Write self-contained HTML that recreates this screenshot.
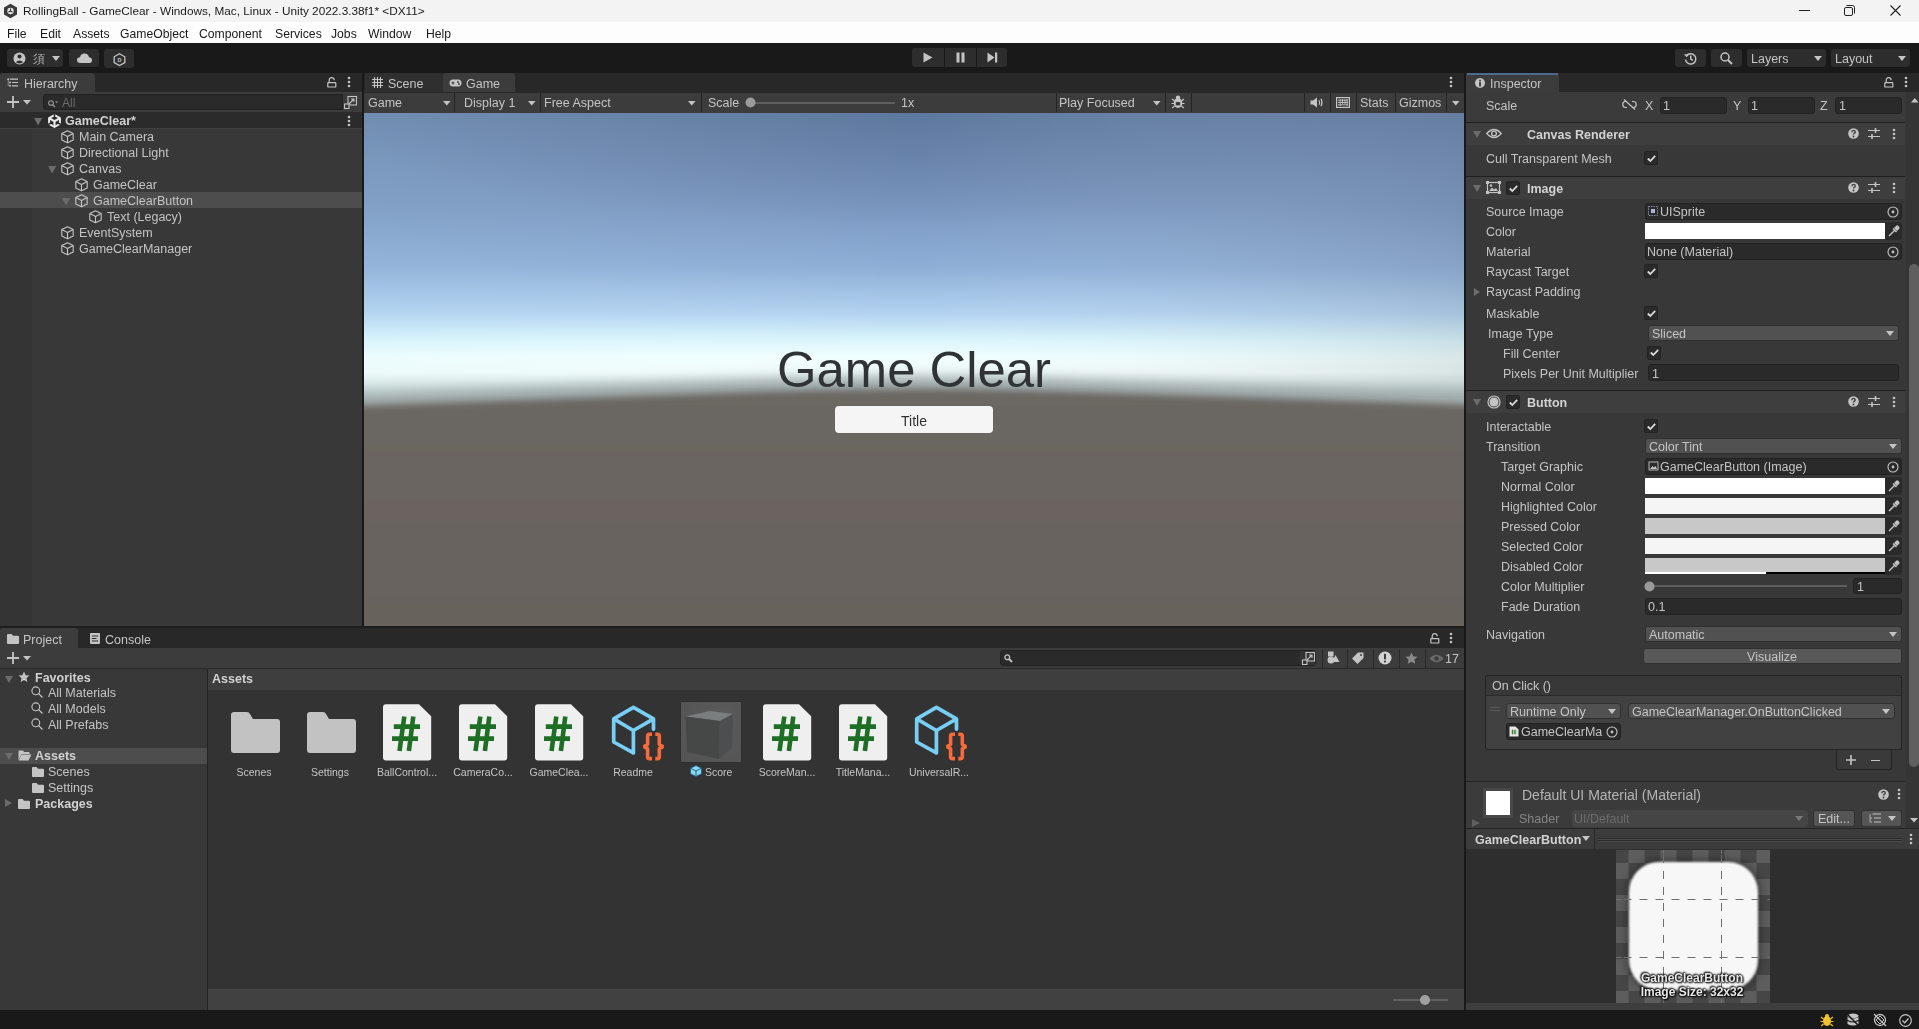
<!DOCTYPE html>
<html><head><meta charset="utf-8">
<style>
*{box-sizing:border-box;margin:0;padding:0}
html,body{width:1919px;height:1029px;overflow:hidden;background:#191919;font-family:"Liberation Sans",sans-serif;font-size:12.5px;color:#c4c4c4;position:relative;-webkit-font-smoothing:antialiased}
.a{position:absolute}
.t{position:absolute;white-space:nowrap;will-change:transform}
svg.a{overflow:visible}
</style></head><body>
<div class="a" style="left:0px;top:0px;width:1919px;height:22px;background:#f3f3f3;"></div>
<svg class="a" style="left:3px;top:3px;" width="15" height="16" viewBox="0 0 15 16"><path d="M7.5 0.8L14 4.4V11.6L7.5 15.2L1 11.6V4.4Z" fill="#3a3a3a"/><circle cx="7.5" cy="8" r="3.2" fill="#e8e8e8"/><path d="M7.5 5.5V8L5.4 9.3M7.5 8L9.6 9.3" stroke="#3a3a3a" stroke-width="1.1" fill="none"/></svg>
<div class="t" style="left:23px;top:6.00px;font-size:11.8px;line-height:11.8px;color:#1a1a1a;">RollingBall - GameClear - Windows, Mac, Linux - Unity 2022.3.38f1* &lt;DX11&gt;</div>
<svg class="a" style="left:1799px;top:10px;" width="11" height="2" viewBox="0 0 11 2"><rect x="0" y="0" width="11" height="1" fill="#222"/></svg>
<svg class="a" style="left:1844px;top:5px;" width="11" height="11" viewBox="0 0 11 11"><path d="M2.5 0.5H8.5Q10.5 0.5 10.5 2.5V8.5" stroke="#222" fill="none" stroke-width="1"/><rect x="0.5" y="2.5" width="8" height="8" rx="1.5" stroke="#222" fill="none" stroke-width="1"/></svg>
<svg class="a" style="left:1890px;top:5px;" width="11" height="11" viewBox="0 0 11 11"><path d="M0.5 0.5L10.5 10.5M10.5 0.5L0.5 10.5" stroke="#222" stroke-width="1.1"/></svg>
<div class="a" style="left:0px;top:22px;width:1919px;height:21px;background:#fdfdfd;"></div>
<div class="t" style="left:7px;top:28.00px;font-size:12.2px;line-height:12.2px;color:#1a1a1a;">File</div>
<div class="t" style="left:39.6px;top:28.00px;font-size:12.2px;line-height:12.2px;color:#1a1a1a;">Edit</div>
<div class="t" style="left:73px;top:28.00px;font-size:12.2px;line-height:12.2px;color:#1a1a1a;">Assets</div>
<div class="t" style="left:120px;top:28.00px;font-size:12.2px;line-height:12.2px;color:#1a1a1a;">GameObject</div>
<div class="t" style="left:199px;top:28.00px;font-size:12.2px;line-height:12.2px;color:#1a1a1a;">Component</div>
<div class="t" style="left:275px;top:28.00px;font-size:12.2px;line-height:12.2px;color:#1a1a1a;">Services</div>
<div class="t" style="left:331px;top:28.00px;font-size:12.2px;line-height:12.2px;color:#1a1a1a;">Jobs</div>
<div class="t" style="left:368px;top:28.00px;font-size:12.2px;line-height:12.2px;color:#1a1a1a;">Window</div>
<div class="t" style="left:426.4px;top:28.00px;font-size:12.2px;line-height:12.2px;color:#1a1a1a;">Help</div>
<div class="a" style="left:0px;top:43px;width:1919px;height:30px;background:#191919;"></div>
<div class="a" style="left:7px;top:49px;width:56px;height:18px;background:#2d2d2d;border-radius:3px"></div>
<svg class="a" style="left:13px;top:52px;" width="13" height="13" viewBox="0 0 13 13"><circle cx="6.5" cy="6.5" r="6" fill="#c4c4c4"/><circle cx="6.5" cy="4.6" r="2" fill="#2d2d2d"/><path d="M2.8 10.3Q6.5 6.8 10.2 10.3Q6.5 12.6 2.8 10.3Z" fill="#2d2d2d"/></svg>
<div class="t" style="left:33px;top:54.00px;font-size:11.5px;line-height:11.5px;color:#b0b0b0;">須</div>
<svg class="a" style="left:52px;top:56px;" width="8" height="5" viewBox="0 0 8 5"><path d="M0 0H8L4.0 5Z" fill="#c4c4c4"/></svg>
<div class="a" style="left:69px;top:49px;width:30px;height:18px;background:#2d2d2d;border-radius:3px"></div>
<svg class="a" style="left:77px;top:53px;" width="15" height="10" viewBox="0 0 15 10"><path d="M3.5 10Q0 10 0 7Q0 4.3 3 4.2Q3.8 0.5 7.5 0.5Q11.3 0.5 12 4.3Q15 4.6 15 7.2Q15 10 12 10Z" fill="#c4c4c4"/></svg>
<div class="a" style="left:104px;top:49px;width:30px;height:19px;background:#2d2d2d;border-radius:3px"></div>
<svg class="a" style="left:113px;top:53px;" width="13" height="13" viewBox="0 0 13 13"><path d="M6.5 0.8L11.8 3.8V9.6L6.5 12.6L1.2 9.6V3.8Z" stroke="#c4c4c4" stroke-width="1.3" fill="none"/><text x="6.5" y="9.2" font-size="5.5" font-family="Liberation Sans" font-weight="bold" fill="#c4c4c4" text-anchor="middle">D</text></svg>
<div class="a" style="left:912px;top:48px;width:32px;height:19px;background:#2d2d2d;border-radius:3px 0 0 3px"></div>
<div class="a" style="left:945px;top:48px;width:31px;height:19px;background:#2d2d2d;"></div>
<div class="a" style="left:977px;top:48px;width:30px;height:19px;background:#2d2d2d;border-radius:0 3px 3px 0"></div>
<svg class="a" style="left:923px;top:52px;" width="10" height="11" viewBox="0 0 10 11"><path d="M0.5 0.5L9.5 5.5L0.5 10.5Z" fill="#c4c4c4"/></svg>
<svg class="a" style="left:956px;top:52px;" width="9" height="11" viewBox="0 0 9 11"><rect x="0.5" y="0.5" width="3" height="10" fill="#c4c4c4"/><rect x="5.5" y="0.5" width="3" height="10" fill="#c4c4c4"/></svg>
<svg class="a" style="left:987px;top:52px;" width="11" height="11" viewBox="0 0 11 11"><path d="M0.5 0.5L7.5 5.5L0.5 10.5Z" fill="#c4c4c4"/><rect x="8" y="0.5" width="2.2" height="10" fill="#c4c4c4"/></svg>
<div class="a" style="left:1675px;top:49px;width:31px;height:18px;background:#2d2d2d;border-radius:3px"></div>
<svg class="a" style="left:1684px;top:52px;" width="13" height="13" viewBox="0 0 13 13"><path d="M2.2 4.2A5.2 5.2 0 1 1 1.5 7.5" stroke="#c4c4c4" stroke-width="1.5" fill="none"/><path d="M0 2.2L2.6 5.2L5 2.6Z" fill="#c4c4c4"/><path d="M6.8 3.5V7L9 8.5" stroke="#c4c4c4" stroke-width="1.5" fill="none"/></svg>
<div class="a" style="left:1711px;top:49px;width:31px;height:18px;background:#2d2d2d;border-radius:3px"></div>
<svg class="a" style="left:1720px;top:52px;" width="13" height="13" viewBox="0 0 13 13"><circle cx="5" cy="5" r="4" stroke="#c4c4c4" stroke-width="1.5" fill="none"/><path d="M8 8L12 12" stroke="#c4c4c4" stroke-width="2"/></svg>
<div class="a" style="left:1747px;top:49px;width:79px;height:18px;background:#2d2d2d;border-radius:3px"></div>
<div class="t" style="left:1751px;top:53.00px;font-size:12.5px;line-height:12.5px;color:#c4c4c4;">Layers</div>
<svg class="a" style="left:1814px;top:56px;" width="8" height="5" viewBox="0 0 8 5"><path d="M0 0H8L4.0 5Z" fill="#c4c4c4"/></svg>
<div class="a" style="left:1831px;top:49px;width:79px;height:18px;background:#2d2d2d;border-radius:3px"></div>
<div class="t" style="left:1835px;top:53.00px;font-size:12.5px;line-height:12.5px;color:#c4c4c4;">Layout</div>
<svg class="a" style="left:1898px;top:56px;" width="8" height="5" viewBox="0 0 8 5"><path d="M0 0H8L4.0 5Z" fill="#c4c4c4"/></svg>
<div class="a" style="left:0px;top:73px;width:362px;height:19px;background:#282828;"></div>
<div class="a" style="left:0px;top:73px;width:95px;height:19px;background:#3c3c3c;border-radius:3px 3px 0 0"></div>
<svg class="a" style="left:7px;top:78px;" width="12" height="9" viewBox="0 0 12 9"><circle cx="1.2" cy="1.2" r="1" fill="#c4c4c4"/><circle cx="3" cy="4.5" r="1" fill="#c4c4c4"/><circle cx="3" cy="7.8" r="1" fill="#c4c4c4"/><path d="M3 1.2H11M5 4.5H11M5 7.8H11" stroke="#c4c4c4" stroke-width="1.2"/><path d="M1.2 1.2V7.8" stroke="#c4c4c4" stroke-width="0.6"/></svg>
<div class="t" style="left:23.7px;top:78.00px;font-size:12.5px;line-height:12.5px;color:#c4c4c4;">Hierarchy</div>
<svg class="a" style="left:327px;top:77px;" width="10" height="11" viewBox="0 0 10 11"><path d="M2.2 5.4V3.2Q2.2 0.7 4.6 0.7Q7 0.7 7.2 3.2" stroke="#c4c4c4" stroke-width="1.2" fill="none"/><rect x="0.8" y="5.6" width="8" height="4.4" rx="0.6" stroke="#c4c4c4" stroke-width="1.2" fill="none"/></svg>
<svg class="a" style="left:347px;top:76px;" width="4" height="12" viewBox="0 0 4 12"><circle cx="2" cy="2" r="1.3" fill="#c4c4c4"/><circle cx="2" cy="6" r="1.3" fill="#c4c4c4"/><circle cx="2" cy="10" r="1.3" fill="#c4c4c4"/></svg>
<div class="a" style="left:0px;top:92px;width:362px;height:20px;background:#3c3c3c;"></div>
<svg class="a" style="left:7px;top:96px;" width="12" height="12" viewBox="0 0 12 12"><path d="M6 0V12M0 6H12" stroke="#c4c4c4" stroke-width="1.8"/></svg>
<svg class="a" style="left:23px;top:100px;" width="8" height="4.5" viewBox="0 0 8 4.5"><path d="M0 0H8L4.0 4.5Z" fill="#c4c4c4"/></svg>
<div class="a" style="left:43px;top:94px;width:300px;height:16px;background:#2a2a2a;border:1px solid #212121;border-radius:3px 0 0 3px"></div>
<svg class="a" style="left:48px;top:100px;" width="10" height="8" viewBox="0 0 10 8"><circle cx="3" cy="3" r="2.3" stroke="#9a9a9a" stroke-width="1.1" fill="none"/><path d="M4.6 4.6L7 7" stroke="#9a9a9a" stroke-width="1.2"/><path d="M7 1.5H10L8.5 3.2Z" fill="#9a9a9a"/></svg>
<div class="t" style="left:62px;top:97.00px;font-size:12px;line-height:12px;color:#6a6a6a;">All</div>
<div class="a" style="left:343px;top:94px;width:15px;height:16px;background:#3a3a3a;border-radius:0 3px 3px 0"></div>
<svg class="a" style="left:344px;top:96px;" width="13" height="13" viewBox="0 0 13 13"><rect x="4" y="0.5" width="8.5" height="8.5" stroke="#c4c4c4" fill="none" stroke-width="1.1"/><rect x="0.5" y="8" width="4.5" height="4.5" stroke="#c4c4c4" fill="#3a3a3a" stroke-width="1.1"/><path d="M5 8L10 3M7 3H10V6" stroke="#c4c4c4" stroke-width="1.1" fill="none"/></svg>
<div class="a" style="left:0px;top:112px;width:362px;height:514px;background:#383838;"></div>
<div class="a" style="left:0px;top:112px;width:32px;height:514px;background:#343434;"></div>
<div class="a" style="left:0px;top:112px;width:362px;height:16px;background:#2b2b2b;"></div>
<div class="a" style="left:0px;top:128px;width:362px;height:1px;background:#404040;"></div>
<svg class="a" style="left:34.4px;top:118px;" width="8.2" height="7.5" viewBox="0 0 8.2 7.5"><path d="M0 0H8.2L4.1 7.5Z" fill="#6c6c6c"/></svg>
<svg class="a" style="left:47.5px;top:113.5px;" width="13" height="14" viewBox="0 0 13 14"><path d="M6.5 1L11.9 4.1V9.9L6.5 13L1.1 9.9V4.1Z" stroke="#ececec" stroke-width="2" fill="none" stroke-linejoin="round"/><path d="M1.5 4.3L6.5 7.2L11.5 4.3M6.5 7.2V12.8" stroke="#ececec" stroke-width="2.1" fill="none"/><path d="M6.5 0V5.2M0 10.6L2.8 9M13 10.6L10.2 9" stroke="#2b2b2b" stroke-width="1.5"/></svg>
<div class="t" style="left:65px;top:115.00px;font-size:12.5px;line-height:12.5px;color:#d2d2d2;font-weight:bold;">GameClear*</div>
<svg class="a" style="left:347px;top:115px;" width="4" height="12" viewBox="0 0 4 12"><circle cx="2" cy="2" r="1.3" fill="#c4c4c4"/><circle cx="2" cy="6" r="1.3" fill="#c4c4c4"/><circle cx="2" cy="10" r="1.3" fill="#c4c4c4"/></svg>
<svg class="a" style="left:61px;top:129.5px;" width="13" height="14" viewBox="0 0 13 14"><path d="M6.5 0.8L12.2 3.6V9.9L6.5 12.7L0.8 9.9V3.6Z M0.8 3.6L6.5 6.4L12.2 3.6 M6.5 6.4V12.7" stroke="#c4c4c4" stroke-width="1.1" fill="none" stroke-linejoin="round"/></svg>
<div class="t" style="left:78.5px;top:131.00px;font-size:12.5px;line-height:12.5px;color:#c4c4c4;">Main Camera</div>
<svg class="a" style="left:61px;top:145.5px;" width="13" height="14" viewBox="0 0 13 14"><path d="M6.5 0.8L12.2 3.6V9.9L6.5 12.7L0.8 9.9V3.6Z M0.8 3.6L6.5 6.4L12.2 3.6 M6.5 6.4V12.7" stroke="#c4c4c4" stroke-width="1.1" fill="none" stroke-linejoin="round"/></svg>
<div class="t" style="left:78.5px;top:147.00px;font-size:12.5px;line-height:12.5px;color:#c4c4c4;">Directional Light</div>
<svg class="a" style="left:48px;top:166px;" width="8.2" height="7.5" viewBox="0 0 8.2 7.5"><path d="M0 0H8.2L4.1 7.5Z" fill="#6c6c6c"/></svg>
<svg class="a" style="left:61px;top:161.5px;" width="13" height="14" viewBox="0 0 13 14"><path d="M6.5 0.8L12.2 3.6V9.9L6.5 12.7L0.8 9.9V3.6Z M0.8 3.6L6.5 6.4L12.2 3.6 M6.5 6.4V12.7" stroke="#c4c4c4" stroke-width="1.1" fill="none" stroke-linejoin="round"/></svg>
<div class="t" style="left:78.5px;top:163.00px;font-size:12.5px;line-height:12.5px;color:#c4c4c4;">Canvas</div>
<svg class="a" style="left:75px;top:177.5px;" width="13" height="14" viewBox="0 0 13 14"><path d="M6.5 0.8L12.2 3.6V9.9L6.5 12.7L0.8 9.9V3.6Z M0.8 3.6L6.5 6.4L12.2 3.6 M6.5 6.4V12.7" stroke="#c4c4c4" stroke-width="1.1" fill="none" stroke-linejoin="round"/></svg>
<div class="t" style="left:92.5px;top:179.00px;font-size:12.5px;line-height:12.5px;color:#c4c4c4;">GameClear</div>
<div class="a" style="left:0px;top:192px;width:362px;height:16px;background:#4d4d4d;"></div>
<svg class="a" style="left:62px;top:198px;" width="8.2" height="7.5" viewBox="0 0 8.2 7.5"><path d="M0 0H8.2L4.1 7.5Z" fill="#6c6c6c"/></svg>
<svg class="a" style="left:75px;top:193.5px;" width="13" height="14" viewBox="0 0 13 14"><path d="M6.5 0.8L12.2 3.6V9.9L6.5 12.7L0.8 9.9V3.6Z M0.8 3.6L6.5 6.4L12.2 3.6 M6.5 6.4V12.7" stroke="#c4c4c4" stroke-width="1.1" fill="none" stroke-linejoin="round"/></svg>
<div class="t" style="left:92.5px;top:195.00px;font-size:12.5px;line-height:12.5px;color:#c4c4c4;">GameClearButton</div>
<svg class="a" style="left:89px;top:209.5px;" width="13" height="14" viewBox="0 0 13 14"><path d="M6.5 0.8L12.2 3.6V9.9L6.5 12.7L0.8 9.9V3.6Z M0.8 3.6L6.5 6.4L12.2 3.6 M6.5 6.4V12.7" stroke="#c4c4c4" stroke-width="1.1" fill="none" stroke-linejoin="round"/></svg>
<div class="t" style="left:106.5px;top:211.00px;font-size:12.5px;line-height:12.5px;color:#c4c4c4;">Text (Legacy)</div>
<svg class="a" style="left:61px;top:225.5px;" width="13" height="14" viewBox="0 0 13 14"><path d="M6.5 0.8L12.2 3.6V9.9L6.5 12.7L0.8 9.9V3.6Z M0.8 3.6L6.5 6.4L12.2 3.6 M6.5 6.4V12.7" stroke="#c4c4c4" stroke-width="1.1" fill="none" stroke-linejoin="round"/></svg>
<div class="t" style="left:78.5px;top:227.00px;font-size:12.5px;line-height:12.5px;color:#c4c4c4;">EventSystem</div>
<svg class="a" style="left:61px;top:241.5px;" width="13" height="14" viewBox="0 0 13 14"><path d="M6.5 0.8L12.2 3.6V9.9L6.5 12.7L0.8 9.9V3.6Z M0.8 3.6L6.5 6.4L12.2 3.6 M6.5 6.4V12.7" stroke="#c4c4c4" stroke-width="1.1" fill="none" stroke-linejoin="round"/></svg>
<div class="t" style="left:78.5px;top:243.00px;font-size:12.5px;line-height:12.5px;color:#c4c4c4;">GameClearManager</div>
<div class="a" style="left:364px;top:73px;width:1100px;height:19px;background:#282828;"></div>
<div class="a" style="left:365px;top:73px;width:78px;height:19px;background:#2f2f2f;border-radius:3px 3px 0 0"></div>
<svg class="a" style="left:372px;top:77px;" width="11" height="11" viewBox="0 0 11 11"><path d="M2.5 0V11M5.5 0V11M8.5 0V11M0 2.5H11M0 5.5H11M0 8.5H11" stroke="#c4c4c4" stroke-width="1.1"/></svg>
<div class="t" style="left:388px;top:78.00px;font-size:12.5px;line-height:12.5px;color:#c4c4c4;">Scene</div>
<div class="a" style="left:443px;top:73px;width:72px;height:19px;background:#3c3c3c;border-radius:3px 3px 0 0"></div>
<svg class="a" style="left:449px;top:79px;" width="13" height="8" viewBox="0 0 13 8"><rect x="0.5" y="0.5" width="12" height="7" rx="3.5" fill="#c4c4c4"/><path d="M2.5 4H5.5M4 2.5V5.5" stroke="#3c3c3c" stroke-width="1"/><circle cx="9" cy="3" r="0.9" fill="#3c3c3c"/><circle cx="10" cy="5" r="0.9" fill="#3c3c3c"/></svg>
<div class="t" style="left:466px;top:78.00px;font-size:12.5px;line-height:12.5px;color:#c4c4c4;">Game</div>
<svg class="a" style="left:1449px;top:76px;" width="4" height="12" viewBox="0 0 4 12"><circle cx="2" cy="2" r="1.3" fill="#c4c4c4"/><circle cx="2" cy="6" r="1.3" fill="#c4c4c4"/><circle cx="2" cy="10" r="1.3" fill="#c4c4c4"/></svg>
<div class="a" style="left:364px;top:92px;width:1100px;height:21px;background:#3c3c3c;"></div>
<div class="a" style="left:364px;top:92px;width:1100px;height:1px;background:#2a2a2a;"></div>
<div class="t" style="left:368.4px;top:97.00px;font-size:12.5px;line-height:12.5px;color:#c4c4c4;">Game</div>
<svg class="a" style="left:442.5px;top:100.5px;" width="7.5" height="4.5" viewBox="0 0 7.5 4.5"><path d="M0 0H7.5L3.75 4.5Z" fill="#c4c4c4"/></svg>
<div class="a" style="left:454.4px;top:93px;width:1px;height:19px;background:#242424;"></div>
<div class="t" style="left:464px;top:97.00px;font-size:12.5px;line-height:12.5px;color:#c4c4c4;">Display 1</div>
<svg class="a" style="left:528px;top:100.5px;" width="7.5" height="4.5" viewBox="0 0 7.5 4.5"><path d="M0 0H7.5L3.75 4.5Z" fill="#c4c4c4"/></svg>
<div class="a" style="left:540px;top:93px;width:1px;height:19px;background:#242424;"></div>
<div class="t" style="left:544.4px;top:97.00px;font-size:12.5px;line-height:12.5px;color:#c4c4c4;">Free Aspect</div>
<svg class="a" style="left:688px;top:100.5px;" width="7.5" height="4.5" viewBox="0 0 7.5 4.5"><path d="M0 0H7.5L3.75 4.5Z" fill="#c4c4c4"/></svg>
<div class="a" style="left:700.5px;top:93px;width:1px;height:19px;background:#242424;"></div>
<div class="t" style="left:707.5px;top:97.00px;font-size:12.5px;line-height:12.5px;color:#c4c4c4;">Scale</div>
<div class="a" style="left:750px;top:102px;width:145px;height:2px;background:#5e5e5e;"></div>
<svg class="a" style="left:744.5px;top:97px;" width="11" height="11" viewBox="0 0 11 11"><circle cx="5.5" cy="5.5" r="5" fill="#9a9a9a"/></svg>
<div class="t" style="left:901px;top:97.00px;font-size:12.5px;line-height:12.5px;color:#c4c4c4;">1x</div>
<div class="a" style="left:1055.5px;top:93px;width:1px;height:19px;background:#242424;"></div>
<div class="t" style="left:1059px;top:97.00px;font-size:12.5px;line-height:12.5px;color:#c4c4c4;">Play Focused</div>
<svg class="a" style="left:1153px;top:100.5px;" width="7.5" height="4.5" viewBox="0 0 7.5 4.5"><path d="M0 0H7.5L3.75 4.5Z" fill="#c4c4c4"/></svg>
<div class="a" style="left:1165px;top:93px;width:1px;height:19px;background:#242424;"></div>
<svg class="a" style="left:1171px;top:95px;" width="14" height="14" viewBox="0 0 14 14"><ellipse cx="7" cy="8" rx="4.3" ry="5" fill="#c4c4c4"/><circle cx="7" cy="2.8" r="2.2" fill="#c4c4c4"/><path d="M1 4L3.5 6M13 4L10.5 6M0.5 8.5H3M13.5 8.5H11M1.2 13L3.5 11M12.8 13L10.5 11" stroke="#c4c4c4" stroke-width="1.1"/><rect x="4.8" y="7" width="4.4" height="3.4" fill="#3c3c3c"/></svg>
<div class="a" style="left:1191px;top:93px;width:1px;height:19px;background:#242424;"></div>
<div class="a" style="left:1304px;top:93px;width:1px;height:19px;background:#242424;"></div>
<svg class="a" style="left:1310px;top:97px;" width="14" height="11" viewBox="0 0 14 11"><path d="M0.5 3.5H3L7 0.5V10.5L3 7.5H0.5Z" fill="#c4c4c4"/><path d="M9 3.2Q10.2 5.5 9 7.8M11 1.8Q13 5.5 11 9.2" stroke="#c4c4c4" stroke-width="1.1" fill="none"/></svg>
<div class="a" style="left:1330px;top:93px;width:1px;height:19px;background:#242424;"></div>
<svg class="a" style="left:1336px;top:97px;" width="14" height="11" viewBox="0 0 14 11"><rect x="0.6" y="0.6" width="12.8" height="9.8" stroke="#c4c4c4" stroke-width="1.2" fill="none"/><path d="M2 3.2H12M2 5.5H12M2 7.8H12M4.2 2V9M6.6 2V7M9 2V7M11.2 2V9" stroke="#c4c4c4" stroke-width="0.9"/></svg>
<div class="a" style="left:1356px;top:93px;width:1px;height:19px;background:#242424;"></div>
<div class="t" style="left:1360px;top:97.00px;font-size:12.5px;line-height:12.5px;color:#c4c4c4;">Stats</div>
<div class="a" style="left:1395px;top:93px;width:1px;height:19px;background:#242424;"></div>
<div class="t" style="left:1399px;top:97.00px;font-size:12.5px;line-height:12.5px;color:#c4c4c4;">Gizmos</div>
<div class="a" style="left:1446px;top:93px;width:1px;height:19px;background:#242424;"></div>
<svg class="a" style="left:1451.5px;top:100.5px;" width="7.5" height="4.5" viewBox="0 0 7.5 4.5"><path d="M0 0H7.5L3.75 4.5Z" fill="#c4c4c4"/></svg>
<svg class="a" style="left:364px;top:113px;overflow:hidden" width="1100" height="513" viewBox="0 0 1100 513">
<defs>
<linearGradient id="sky" x1="0" y1="0" x2="0" y2="1">
<stop offset="0" stop-color="#6883ab"/>
<stop offset="0.18" stop-color="#7a97c0"/>
<stop offset="0.30" stop-color="#8eaed6"/>
<stop offset="0.39" stop-color="#b2d2f0"/>
<stop offset="0.44" stop-color="#d8f4fb"/>
<stop offset="0.475" stop-color="#f0fefe"/>
<stop offset="0.505" stop-color="#f0fcfa"/>
<stop offset="0.54" stop-color="#d0e0de"/>
<stop offset="1" stop-color="#c8d4d4"/>
</linearGradient>
<radialGradient id="dome" cx="0.5" cy="0" r="0.5" gradientTransform="translate(0.5 0) scale(1.1 0.75) translate(-0.5 0)">
<stop offset="0" stop-color="#3a4e70" stop-opacity="0.22"/>
<stop offset="0.6" stop-color="#3a4e70" stop-opacity="0.10"/>
<stop offset="1" stop-color="#3a4e70" stop-opacity="0"/>
</radialGradient>
<linearGradient id="side" x1="0" y1="0" x2="1" y2="0">
<stop offset="0" stop-color="#c8f0ff" stop-opacity="0.10"/>
<stop offset="0.5" stop-color="#ffffff" stop-opacity="0"/>
<stop offset="1" stop-color="#606870" stop-opacity="0.16"/>
</linearGradient>
<linearGradient id="ground" x1="0" y1="0" x2="0" y2="1">
<stop offset="0" stop-color="#6c6763"/>
<stop offset="1" stop-color="#67615c"/>
</linearGradient>
<filter id="bl1" x="-10%" y="-50%" width="120%" height="200%"><feGaussianBlur stdDeviation="7"/></filter>
<filter id="bl2" x="-10%" y="-50%" width="120%" height="200%"><feGaussianBlur stdDeviation="3"/></filter>
</defs>
<rect x="0" y="0" width="1100" height="513" fill="url(#sky)"/>
<rect x="0" y="0" width="1100" height="300" fill="url(#dome)"/>
<rect x="0" y="0" width="1100" height="285" fill="url(#side)"/>
<path d="M-30 290 L0 293 L400 279 Q550 274 700 279 L1100 292 L1130 295 V560 H-30Z" fill="#98a2a2" filter="url(#bl1)" transform="translate(0 -12)"/>
<path d="M-30 290 L0 293 L400 279 Q550 274 700 279 L1100 292 L1130 295 V560 H-30Z" fill="url(#ground)" filter="url(#bl2)"/>
</svg>
<div class="t" style="left:614px;width:600px;text-align:center;top:345.00px;font-size:50.8px;line-height:50.8px;color:#2f3336;">Game Clear</div>
<div class="a" style="left:835px;top:406px;width:158px;height:27px;background:#f5f5f5;border-radius:4px"></div>
<div class="t" style="left:614px;width:600px;text-align:center;top:414.00px;font-size:14px;line-height:14px;color:#323232;">Title</div>
<div class="a" style="left:1466px;top:73px;width:453px;height:19px;background:#282828;"></div>
<div class="a" style="left:1466px;top:73px;width:93px;height:19px;background:#3c3c3c;border-radius:3px 3px 0 0"></div>
<div class="a" style="left:1467px;top:73px;width:91px;height:2px;background:#4a6b8c;"></div>
<svg class="a" style="left:1475px;top:78px;" width="10" height="10" viewBox="0 0 10 10"><circle cx="5" cy="5" r="5" fill="#c4c4c4"/><rect x="4.1" y="4" width="1.8" height="4.5" fill="#3c3c3c"/><circle cx="5" cy="2.4" r="1" fill="#3c3c3c"/></svg>
<div class="t" style="left:1490.3px;top:78.00px;font-size:12.5px;line-height:12.5px;color:#c4c4c4;">Inspector</div>
<svg class="a" style="left:1884px;top:77px;" width="10" height="11" viewBox="0 0 10 11"><path d="M2.2 5.4V3.2Q2.2 0.7 4.6 0.7Q7 0.7 7.2 3.2" stroke="#c4c4c4" stroke-width="1.2" fill="none"/><rect x="0.8" y="5.6" width="8" height="4.4" rx="0.6" stroke="#c4c4c4" stroke-width="1.2" fill="none"/></svg>
<svg class="a" style="left:1904px;top:76px;" width="4" height="12" viewBox="0 0 4 12"><circle cx="2" cy="2" r="1.3" fill="#c4c4c4"/><circle cx="2" cy="6" r="1.3" fill="#c4c4c4"/><circle cx="2" cy="10" r="1.3" fill="#c4c4c4"/></svg>
<div class="a" style="left:1466px;top:92px;width:453px;height:736px;background:#383838;"></div>
<div class="a" style="left:1906px;top:92px;width:13px;height:736px;background:#353535;"></div>
<svg class="a" style="left:1910.5px;top:97.5px;" width="7.5" height="4.5" viewBox="0 0 7.5 4.5"><path d="M0 4.5H7.5L3.75 0Z" fill="#c4c4c4"/></svg>
<div class="a" style="left:1909px;top:264px;width:10px;height:503px;background:#5f5f5f;border-radius:5px"></div>
<svg class="a" style="left:1910.2px;top:818px;" width="8" height="4.5" viewBox="0 0 8 4.5"><path d="M0 0H8L4 4.5Z" fill="#c4c4c4"/></svg>
<div class="a" style="left:1466px;top:92px;width:439px;height:31px;background:#3b3b3b;"></div>
<div class="t" style="left:1485.5px;top:100.00px;font-size:12.5px;line-height:12.5px;color:#c4c4c4;">Scale</div>
<svg class="a" style="left:1622px;top:99px;" width="15" height="11" viewBox="0 0 15 11"><path d="M5 2.5H3.5Q0.8 2.5 0.8 5.5Q0.8 8.5 3.5 8.5H5M10 2.5H11.5Q14.2 2.5 14.2 5.5Q14.2 8.5 11.5 8.5H10" stroke="#c4c4c4" stroke-width="1.2" fill="none"/><path d="M2 0.5L13 10.5" stroke="#c4c4c4" stroke-width="1.2"/></svg>
<div class="t" style="left:1645px;top:100.00px;font-size:12.5px;line-height:12.5px;color:#c4c4c4;">X</div>
<div class="a" style="left:1659.5px;top:96.5px;width:67px;height:17px;background:#2a2a2a;border:1px solid #222;border-radius:3px"></div>
<div class="t" style="left:1663.0px;top:100.00px;font-size:12.5px;line-height:12.5px;color:#c4c4c4;">1</div>
<div class="t" style="left:1733px;top:100.00px;font-size:12.5px;line-height:12.5px;color:#c4c4c4;">Y</div>
<div class="a" style="left:1747.5px;top:96.5px;width:67px;height:17px;background:#2a2a2a;border:1px solid #222;border-radius:3px"></div>
<div class="t" style="left:1751.0px;top:100.00px;font-size:12.5px;line-height:12.5px;color:#c4c4c4;">1</div>
<div class="t" style="left:1820px;top:100.00px;font-size:12.5px;line-height:12.5px;color:#c4c4c4;">Z</div>
<div class="a" style="left:1835px;top:96.5px;width:67px;height:17px;background:#2a2a2a;border:1px solid #222;border-radius:3px"></div>
<div class="t" style="left:1838.5px;top:100.00px;font-size:12.5px;line-height:12.5px;color:#c4c4c4;">1</div>
<div class="a" style="left:1466px;top:122px;width:439px;height:1px;background:#1f1f1f;"></div>
<div class="a" style="left:1466px;top:123px;width:439px;height:22px;background:#3e3e3e;"></div>
<svg class="a" style="left:1473px;top:131px;" width="8" height="7" viewBox="0 0 8 7"><path d="M0 0H8L4.0 7Z" fill="#6c6c6c"/></svg>
<svg class="a" style="left:1486px;top:128px;" width="16" height="11" viewBox="0 0 16 11"><path d="M0.8 5.5Q8 -2.5 15.2 5.5Q8 13.5 0.8 5.5Z" stroke="#c4c4c4" stroke-width="1.3" fill="none"/><circle cx="8" cy="5.5" r="2.4" stroke="#c4c4c4" stroke-width="1.3" fill="none"/></svg>
<div class="t" style="left:1526.6px;top:129.00px;font-size:12.5px;line-height:12.5px;color:#d2d2d2;font-weight:bold;">Canvas Renderer</div>
<svg class="a" style="left:1848px;top:128px;" width="11" height="11" viewBox="0 0 11 11"><circle cx="5.5" cy="5.5" r="5.3" fill="#c4c4c4"/><path d="M3.8 4.2Q3.8 2.4 5.5 2.4Q7.2 2.4 7.2 3.9Q7.2 4.9 6 5.5Q5.5 5.8 5.5 6.6" stroke="#3e3e3e" stroke-width="1.4" fill="none"/><circle cx="5.5" cy="8.5" r="0.9" fill="#3e3e3e"/></svg>
<svg class="a" style="left:1868px;top:128px;" width="12" height="11" viewBox="0 0 12 11"><path d="M0 2.5H12M0 8.5H12" stroke="#c4c4c4" stroke-width="1.2"/><path d="M7.5 0V5M4 6V11" stroke="#c4c4c4" stroke-width="1.6"/></svg>
<svg class="a" style="left:1892px;top:127.5px;" width="4" height="12" viewBox="0 0 4 12"><circle cx="2" cy="2" r="1.3" fill="#c4c4c4"/><circle cx="2" cy="6" r="1.3" fill="#c4c4c4"/><circle cx="2" cy="10" r="1.3" fill="#c4c4c4"/></svg>
<div class="t" style="left:1485.5px;top:153.00px;font-size:12.5px;line-height:12.5px;color:#c4c4c4;">Cull Transparent Mesh</div>
<div class="a" style="left:1644px;top:151px;width:14px;height:14px;background:#2a2a2a;border:1px solid #232323;border-radius:2px"></div>
<svg class="a" style="left:1646.5px;top:154.5px;" width="9" height="7" viewBox="0 0 9 7"><path d="M0.8 3.5L3.3 6L8.2 0.8" stroke="#dadada" stroke-width="1.8" fill="none"/></svg>
<div class="a" style="left:1466px;top:176px;width:439px;height:1px;background:#1f1f1f;"></div>
<div class="a" style="left:1466px;top:177px;width:439px;height:22px;background:#3e3e3e;"></div>
<svg class="a" style="left:1473px;top:185px;" width="8" height="7" viewBox="0 0 8 7"><path d="M0 0H8L4.0 7Z" fill="#6c6c6c"/></svg>
<svg class="a" style="left:1486px;top:181px;" width="15" height="13" viewBox="0 0 15 13"><rect x="1.5" y="1.5" width="12" height="10" stroke="#c4c4c4" stroke-width="1.2" fill="none"/><rect x="0" y="0" width="3" height="3" fill="#c4c4c4"/><rect x="12" y="0" width="3" height="3" fill="#c4c4c4"/><rect x="0" y="10" width="3" height="3" fill="#c4c4c4"/><rect x="12" y="10" width="3" height="3" fill="#c4c4c4"/><path d="M3 10L6 6.5L8 8.5L10 7L12 10Z" fill="#c4c4c4"/><circle cx="5" cy="4.5" r="1.2" fill="#c4c4c4"/></svg>
<div class="a" style="left:1506px;top:181px;width:14px;height:14px;background:#2a2a2a;border:1px solid #232323;border-radius:2px"></div>
<svg class="a" style="left:1508.5px;top:184.5px;" width="9" height="7" viewBox="0 0 9 7"><path d="M0.8 3.5L3.3 6L8.2 0.8" stroke="#dadada" stroke-width="1.8" fill="none"/></svg>
<div class="t" style="left:1526.6px;top:183.00px;font-size:12.5px;line-height:12.5px;color:#d2d2d2;font-weight:bold;">Image</div>
<svg class="a" style="left:1848px;top:182px;" width="11" height="11" viewBox="0 0 11 11"><circle cx="5.5" cy="5.5" r="5.3" fill="#c4c4c4"/><path d="M3.8 4.2Q3.8 2.4 5.5 2.4Q7.2 2.4 7.2 3.9Q7.2 4.9 6 5.5Q5.5 5.8 5.5 6.6" stroke="#3e3e3e" stroke-width="1.4" fill="none"/><circle cx="5.5" cy="8.5" r="0.9" fill="#3e3e3e"/></svg>
<svg class="a" style="left:1868px;top:182px;" width="12" height="11" viewBox="0 0 12 11"><path d="M0 2.5H12M0 8.5H12" stroke="#c4c4c4" stroke-width="1.2"/><path d="M7.5 0V5M4 6V11" stroke="#c4c4c4" stroke-width="1.6"/></svg>
<svg class="a" style="left:1892px;top:181.5px;" width="4" height="12" viewBox="0 0 4 12"><circle cx="2" cy="2" r="1.3" fill="#c4c4c4"/><circle cx="2" cy="6" r="1.3" fill="#c4c4c4"/><circle cx="2" cy="10" r="1.3" fill="#c4c4c4"/></svg>
<div class="t" style="left:1485.5px;top:206.00px;font-size:12.5px;line-height:12.5px;color:#c4c4c4;">Source Image</div>
<div class="a" style="left:1644.5px;top:203px;width:257px;height:17px;background:#2a2a2a;border:1px solid #222;border-radius:3px"></div>
<svg class="a" style="left:1648px;top:206px;" width="10" height="10" viewBox="0 0 10 10"><rect x="0.5" y="0.5" width="9" height="9" stroke="#8a8aa0" fill="none" stroke-width="1" stroke-dasharray="1.5 1"/><rect x="3" y="3" width="4" height="4" fill="#b0b0d0"/></svg>
<div class="t" style="left:1660px;top:206.00px;font-size:12.5px;line-height:12.5px;color:#c4c4c4;">UISprite</div>
<svg class="a" style="left:1887px;top:205.5px;" width="12" height="12" viewBox="0 0 12 12"><circle cx="6" cy="6" r="5" stroke="#c4c4c4" stroke-width="1.1" fill="none"/><circle cx="6" cy="6" r="1.4" fill="#c4c4c4"/></svg>
<div class="t" style="left:1485.5px;top:226.00px;font-size:12.5px;line-height:12.5px;color:#c4c4c4;">Color</div>
<div class="a" style="left:1644.5px;top:223px;width:240px;height:16px;background:#ffffff;"></div>
<div class="a" style="left:1884.5px;top:222px;width:17px;height:18px;background:#2a2a2a;border-radius:0 3px 3px 0"></div>
<svg class="a" style="left:1888px;top:225px;" width="12" height="12" viewBox="0 0 12 12"><path d="M1 11L7 5" stroke="#c4c4c4" stroke-width="1.5"/><path d="M6 3L9 6L11.5 3.5Q12 2 10.5 1Q9.5 0 8.5 0.5Z" fill="#c4c4c4"/><path d="M5 3.5L8.5 7" stroke="#c4c4c4" stroke-width="1.4"/></svg>
<div class="t" style="left:1485.5px;top:246.00px;font-size:12.5px;line-height:12.5px;color:#c4c4c4;">Material</div>
<div class="a" style="left:1644.5px;top:243px;width:257px;height:17px;background:#2a2a2a;border:1px solid #222;border-radius:3px"></div>
<div class="t" style="left:1647px;top:246.00px;font-size:12.5px;line-height:12.5px;color:#c4c4c4;">None (Material)</div>
<svg class="a" style="left:1887px;top:245.5px;" width="12" height="12" viewBox="0 0 12 12"><circle cx="6" cy="6" r="5" stroke="#c4c4c4" stroke-width="1.1" fill="none"/><circle cx="6" cy="6" r="1.4" fill="#c4c4c4"/></svg>
<div class="t" style="left:1485.5px;top:266.00px;font-size:12.5px;line-height:12.5px;color:#c4c4c4;">Raycast Target</div>
<div class="a" style="left:1644px;top:264px;width:14px;height:14px;background:#2a2a2a;border:1px solid #232323;border-radius:2px"></div>
<svg class="a" style="left:1646.5px;top:267.5px;" width="9" height="7" viewBox="0 0 9 7"><path d="M0.8 3.5L3.3 6L8.2 0.8" stroke="#dadada" stroke-width="1.8" fill="none"/></svg>
<svg class="a" style="left:1474px;top:288px;" width="6" height="8" viewBox="0 0 6 8"><path d="M0 0L6 4.0L0 8Z" fill="#6c6c6c"/></svg>
<div class="t" style="left:1485.5px;top:286.00px;font-size:12.5px;line-height:12.5px;color:#c4c4c4;">Raycast Padding</div>
<div class="t" style="left:1485.5px;top:308.00px;font-size:12.5px;line-height:12.5px;color:#c4c4c4;">Maskable</div>
<div class="a" style="left:1644px;top:306px;width:14px;height:14px;background:#2a2a2a;border:1px solid #232323;border-radius:2px"></div>
<svg class="a" style="left:1646.5px;top:309.5px;" width="9" height="7" viewBox="0 0 9 7"><path d="M0.8 3.5L3.3 6L8.2 0.8" stroke="#dadada" stroke-width="1.8" fill="none"/></svg>
<div class="t" style="left:1488px;top:328.00px;font-size:12.5px;line-height:12.5px;color:#c4c4c4;">Image Type</div>
<div class="a" style="left:1648px;top:325px;width:251px;height:16px;background:#515151;border:1px solid #303030;border-radius:3px"></div>
<div class="t" style="left:1652px;top:328.00px;font-size:12.5px;line-height:12.5px;color:#c4c4c4;">Sliced</div>
<svg class="a" style="left:1886px;top:331px;" width="8" height="5" viewBox="0 0 8 5"><path d="M0 0H8L4.0 5Z" fill="#c4c4c4"/></svg>
<div class="t" style="left:1503px;top:348.00px;font-size:12.5px;line-height:12.5px;color:#c4c4c4;">Fill Center</div>
<div class="a" style="left:1647px;top:345.5px;width:14px;height:14px;background:#2a2a2a;border:1px solid #232323;border-radius:2px"></div>
<svg class="a" style="left:1649.5px;top:349.0px;" width="9" height="7" viewBox="0 0 9 7"><path d="M0.8 3.5L3.3 6L8.2 0.8" stroke="#dadada" stroke-width="1.8" fill="none"/></svg>
<div class="t" style="left:1503px;top:368.00px;font-size:12.5px;line-height:12.5px;color:#c4c4c4;">Pixels Per Unit Multiplier</div>
<div class="a" style="left:1648px;top:364px;width:251px;height:17px;background:#2a2a2a;border:1px solid #222;border-radius:3px"></div>
<div class="t" style="left:1651.5px;top:368.00px;font-size:12.5px;line-height:12.5px;color:#c4c4c4;">1</div>
<div class="a" style="left:1466px;top:390px;width:439px;height:1px;background:#1f1f1f;"></div>
<div class="a" style="left:1466px;top:391px;width:439px;height:22px;background:#3e3e3e;"></div>
<svg class="a" style="left:1473px;top:399px;" width="8" height="7" viewBox="0 0 8 7"><path d="M0 0H8L4.0 7Z" fill="#6c6c6c"/></svg>
<svg class="a" style="left:1487px;top:395px;" width="14" height="14" viewBox="0 0 14 14"><circle cx="7" cy="7" r="6" stroke="#c4c4c4" stroke-width="1.2" fill="none"/><circle cx="7" cy="7" r="4.5" fill="#c4c4c4"/></svg>
<div class="a" style="left:1506px;top:395px;width:14px;height:14px;background:#2a2a2a;border:1px solid #232323;border-radius:2px"></div>
<svg class="a" style="left:1508.5px;top:398.5px;" width="9" height="7" viewBox="0 0 9 7"><path d="M0.8 3.5L3.3 6L8.2 0.8" stroke="#dadada" stroke-width="1.8" fill="none"/></svg>
<div class="t" style="left:1526.6px;top:397.00px;font-size:12.5px;line-height:12.5px;color:#d2d2d2;font-weight:bold;">Button</div>
<svg class="a" style="left:1848px;top:396px;" width="11" height="11" viewBox="0 0 11 11"><circle cx="5.5" cy="5.5" r="5.3" fill="#c4c4c4"/><path d="M3.8 4.2Q3.8 2.4 5.5 2.4Q7.2 2.4 7.2 3.9Q7.2 4.9 6 5.5Q5.5 5.8 5.5 6.6" stroke="#3e3e3e" stroke-width="1.4" fill="none"/><circle cx="5.5" cy="8.5" r="0.9" fill="#3e3e3e"/></svg>
<svg class="a" style="left:1868px;top:396px;" width="12" height="11" viewBox="0 0 12 11"><path d="M0 2.5H12M0 8.5H12" stroke="#c4c4c4" stroke-width="1.2"/><path d="M7.5 0V5M4 6V11" stroke="#c4c4c4" stroke-width="1.6"/></svg>
<svg class="a" style="left:1892px;top:395.5px;" width="4" height="12" viewBox="0 0 4 12"><circle cx="2" cy="2" r="1.3" fill="#c4c4c4"/><circle cx="2" cy="6" r="1.3" fill="#c4c4c4"/><circle cx="2" cy="10" r="1.3" fill="#c4c4c4"/></svg>
<div class="t" style="left:1485.5px;top:421.00px;font-size:12.5px;line-height:12.5px;color:#c4c4c4;">Interactable</div>
<div class="a" style="left:1644px;top:419px;width:14px;height:14px;background:#2a2a2a;border:1px solid #232323;border-radius:2px"></div>
<svg class="a" style="left:1646.5px;top:422.5px;" width="9" height="7" viewBox="0 0 9 7"><path d="M0.8 3.5L3.3 6L8.2 0.8" stroke="#dadada" stroke-width="1.8" fill="none"/></svg>
<div class="t" style="left:1485.5px;top:441.00px;font-size:12.5px;line-height:12.5px;color:#c4c4c4;">Transition</div>
<div class="a" style="left:1644.5px;top:438px;width:257px;height:16px;background:#515151;border:1px solid #303030;border-radius:3px"></div>
<div class="t" style="left:1648.5px;top:441.00px;font-size:12.5px;line-height:12.5px;color:#c4c4c4;">Color Tint</div>
<svg class="a" style="left:1888.5px;top:444px;" width="8" height="5" viewBox="0 0 8 5"><path d="M0 0H8L4.0 5Z" fill="#c4c4c4"/></svg>
<div class="t" style="left:1500.5px;top:461.00px;font-size:12.5px;line-height:12.5px;color:#c4c4c4;">Target Graphic</div>
<div class="a" style="left:1644.5px;top:458px;width:257px;height:17px;background:#2a2a2a;border:1px solid #222;border-radius:3px"></div>
<svg class="a" style="left:1648px;top:461px;" width="11" height="10" viewBox="0 0 11 10"><rect x="1" y="1" width="9" height="8" stroke="#c4c4c4" stroke-width="0.9" fill="none"/><path d="M2 8L4.5 5L6 6.5L7.5 5L9 8Z" fill="#c4c4c4"/></svg>
<div class="t" style="left:1660px;top:461.00px;font-size:12.5px;line-height:12.5px;color:#c4c4c4;">GameClearButton (Image)</div>
<svg class="a" style="left:1887px;top:460.5px;" width="12" height="12" viewBox="0 0 12 12"><circle cx="6" cy="6" r="5" stroke="#c4c4c4" stroke-width="1.1" fill="none"/><circle cx="6" cy="6" r="1.4" fill="#c4c4c4"/></svg>
<div class="t" style="left:1500.5px;top:481.00px;font-size:12.5px;line-height:12.5px;color:#c4c4c4;">Normal Color</div>
<div class="a" style="left:1644.5px;top:478px;width:240px;height:16px;background:#ffffff;"></div>
<div class="a" style="left:1884.5px;top:477px;width:17px;height:18px;background:#2a2a2a;border-radius:0 3px 3px 0"></div>
<svg class="a" style="left:1888px;top:480px;" width="12" height="12" viewBox="0 0 12 12"><path d="M1 11L7 5" stroke="#c4c4c4" stroke-width="1.5"/><path d="M6 3L9 6L11.5 3.5Q12 2 10.5 1Q9.5 0 8.5 0.5Z" fill="#c4c4c4"/><path d="M5 3.5L8.5 7" stroke="#c4c4c4" stroke-width="1.4"/></svg>
<div class="t" style="left:1500.5px;top:501.00px;font-size:12.5px;line-height:12.5px;color:#c4c4c4;">Highlighted Color</div>
<div class="a" style="left:1644.5px;top:498px;width:240px;height:16px;background:#f5f5f5;"></div>
<div class="a" style="left:1884.5px;top:497px;width:17px;height:18px;background:#2a2a2a;border-radius:0 3px 3px 0"></div>
<svg class="a" style="left:1888px;top:500px;" width="12" height="12" viewBox="0 0 12 12"><path d="M1 11L7 5" stroke="#c4c4c4" stroke-width="1.5"/><path d="M6 3L9 6L11.5 3.5Q12 2 10.5 1Q9.5 0 8.5 0.5Z" fill="#c4c4c4"/><path d="M5 3.5L8.5 7" stroke="#c4c4c4" stroke-width="1.4"/></svg>
<div class="t" style="left:1500.5px;top:521.00px;font-size:12.5px;line-height:12.5px;color:#c4c4c4;">Pressed Color</div>
<div class="a" style="left:1644.5px;top:518px;width:240px;height:16px;background:#c8c8c8;"></div>
<div class="a" style="left:1884.5px;top:517px;width:17px;height:18px;background:#2a2a2a;border-radius:0 3px 3px 0"></div>
<svg class="a" style="left:1888px;top:520px;" width="12" height="12" viewBox="0 0 12 12"><path d="M1 11L7 5" stroke="#c4c4c4" stroke-width="1.5"/><path d="M6 3L9 6L11.5 3.5Q12 2 10.5 1Q9.5 0 8.5 0.5Z" fill="#c4c4c4"/><path d="M5 3.5L8.5 7" stroke="#c4c4c4" stroke-width="1.4"/></svg>
<div class="t" style="left:1500.5px;top:541.00px;font-size:12.5px;line-height:12.5px;color:#c4c4c4;">Selected Color</div>
<div class="a" style="left:1644.5px;top:538px;width:240px;height:16px;background:#f5f5f5;"></div>
<div class="a" style="left:1884.5px;top:537px;width:17px;height:18px;background:#2a2a2a;border-radius:0 3px 3px 0"></div>
<svg class="a" style="left:1888px;top:540px;" width="12" height="12" viewBox="0 0 12 12"><path d="M1 11L7 5" stroke="#c4c4c4" stroke-width="1.5"/><path d="M6 3L9 6L11.5 3.5Q12 2 10.5 1Q9.5 0 8.5 0.5Z" fill="#c4c4c4"/><path d="M5 3.5L8.5 7" stroke="#c4c4c4" stroke-width="1.4"/></svg>
<div class="t" style="left:1500.5px;top:561.00px;font-size:12.5px;line-height:12.5px;color:#c4c4c4;">Disabled Color</div>
<div class="a" style="left:1644.5px;top:558px;width:240px;height:16px;background:#c8c8c8;"></div>
<div class="a" style="left:1884.5px;top:557px;width:17px;height:18px;background:#2a2a2a;border-radius:0 3px 3px 0"></div>
<svg class="a" style="left:1888px;top:560px;" width="12" height="12" viewBox="0 0 12 12"><path d="M1 11L7 5" stroke="#c4c4c4" stroke-width="1.5"/><path d="M6 3L9 6L11.5 3.5Q12 2 10.5 1Q9.5 0 8.5 0.5Z" fill="#c4c4c4"/><path d="M5 3.5L8.5 7" stroke="#c4c4c4" stroke-width="1.4"/></svg>
<div class="a" style="left:1644.5px;top:572px;width:121px;height:2px;background:#ffffff;"></div>
<div class="a" style="left:1765.5px;top:572px;width:119px;height:2px;background:#000000;"></div>
<div class="t" style="left:1500.5px;top:581.00px;font-size:12.5px;line-height:12.5px;color:#c4c4c4;">Color Multiplier</div>
<div class="a" style="left:1649px;top:585px;width:198px;height:2px;background:#5e5e5e;"></div>
<svg class="a" style="left:1643.5px;top:580.5px;" width="11" height="11" viewBox="0 0 11 11"><circle cx="5.5" cy="5.5" r="5" fill="#9a9a9a"/></svg>
<div class="a" style="left:1852.5px;top:578px;width:49px;height:16px;background:#2a2a2a;border:1px solid #222;border-radius:3px"></div>
<div class="t" style="left:1857px;top:581.00px;font-size:12.5px;line-height:12.5px;color:#c4c4c4;">1</div>
<div class="t" style="left:1500.5px;top:601.00px;font-size:12.5px;line-height:12.5px;color:#c4c4c4;">Fade Duration</div>
<div class="a" style="left:1644.5px;top:598px;width:257px;height:17px;background:#2a2a2a;border:1px solid #222;border-radius:3px"></div>
<div class="t" style="left:1647.5px;top:601.00px;font-size:12.5px;line-height:12.5px;color:#c4c4c4;">0.1</div>
<div class="t" style="left:1485.5px;top:629.00px;font-size:12.5px;line-height:12.5px;color:#c4c4c4;">Navigation</div>
<div class="a" style="left:1644.5px;top:626px;width:257px;height:16px;background:#515151;border:1px solid #303030;border-radius:3px"></div>
<div class="t" style="left:1648.5px;top:629.00px;font-size:12.5px;line-height:12.5px;color:#c4c4c4;">Automatic</div>
<svg class="a" style="left:1888.5px;top:632px;" width="8" height="5" viewBox="0 0 8 5"><path d="M0 0H8L4.0 5Z" fill="#c4c4c4"/></svg>
<div class="a" style="left:1643px;top:648px;width:259px;height:16px;background:#585858;border:1px solid #303030;border-radius:3px"></div>
<div class="t" style="left:1472px;width:600px;text-align:center;top:651.00px;font-size:12.5px;line-height:12.5px;color:#c4c4c4;">Visualize</div>
<div class="a" style="left:1485px;top:675px;width:417px;height:20px;background:#383838;border:1px solid #242424;border-bottom:none;border-radius:3px 3px 0 0"></div>
<div class="t" style="left:1492.2px;top:680.00px;font-size:12.5px;line-height:12.5px;color:#c4c4c4;">On Click ()</div>
<div class="a" style="left:1485px;top:695px;width:417px;height:55px;background:#414141;border:1px solid #242424;border-top:1px solid #2a2a2a;border-radius:0 0 3px 3px"></div>
<div class="a" style="left:1490px;top:707px;width:10px;height:1px;background:#5a5a5a;"></div>
<div class="a" style="left:1490px;top:710px;width:10px;height:1px;background:#5a5a5a;"></div>
<div class="a" style="left:1506px;top:703px;width:115px;height:16px;background:#515151;border:1px solid #303030;border-radius:3px"></div>
<div class="t" style="left:1509.5px;top:706.00px;font-size:12.5px;line-height:12.5px;color:#c4c4c4;">Runtime Only</div>
<svg class="a" style="left:1608px;top:709px;" width="8" height="5" viewBox="0 0 8 5"><path d="M0 0H8L4.0 5Z" fill="#c4c4c4"/></svg>
<div class="a" style="left:1628px;top:703px;width:267px;height:16px;background:#515151;border:1px solid #303030;border-radius:3px"></div>
<div class="t" style="left:1631.5px;top:706.00px;font-size:12.5px;line-height:12.5px;color:#c4c4c4;">GameClearManager.OnButtonClicked</div>
<svg class="a" style="left:1882px;top:709px;" width="8" height="5" viewBox="0 0 8 5"><path d="M0 0H8L4.0 5Z" fill="#c4c4c4"/></svg>
<div class="a" style="left:1506px;top:723px;width:115px;height:17px;background:#2a2a2a;border:1px solid #222;border-radius:3px"></div>
<svg class="a" style="left:1509px;top:726px;" width="10" height="11" viewBox="0 0 10 11"><path d="M0.5 0.5H6.5L9.5 3.5V10.5H0.5Z" fill="#e8e8e8"/><path d="M3.5 3.5V8.5M6 3.5V8.5M2.5 5H7.5M2.5 7H7.5" stroke="#2a7a2a" stroke-width="0.8"/></svg>
<div class="t" style="left:1521px;top:726.00px;font-size:12.5px;line-height:12.5px;color:#c4c4c4;">GameClearMa</div>
<svg class="a" style="left:1606px;top:725.5px;" width="12" height="12" viewBox="0 0 12 12"><circle cx="6" cy="6" r="5" stroke="#c4c4c4" stroke-width="1.1" fill="none"/><circle cx="6" cy="6" r="1.4" fill="#c4c4c4"/></svg>
<div class="a" style="left:1836px;top:750px;width:56px;height:20px;background:#3a3a3a;border:1px solid #242424;border-top:none;border-radius:0 0 3px 3px"></div>
<svg class="a" style="left:1846px;top:755px;" width="10" height="10" viewBox="0 0 10 10"><path d="M5 0V10M0 5H10" stroke="#c4c4c4" stroke-width="1.6"/></svg>
<div class="a" style="left:1871px;top:759.5px;width:9px;height:1.6px;background:#c4c4c4;"></div>
<div class="a" style="left:1466px;top:781px;width:439px;height:1px;background:#242424;"></div>
<div class="a" style="left:1466px;top:782px;width:439px;height:46px;background:#3b3b3b;"></div>
<div class="a" style="left:1482px;top:787px;width:32px;height:32px;background:#484848;border:1px solid #3a3a3a"></div>
<div class="a" style="left:1486px;top:790.5px;width:24px;height:24px;background:#ffffff;"></div>
<div class="t" style="left:1522.3px;top:788.00px;font-size:14px;line-height:14px;color:#b4b4b4;">Default UI Material (Material)</div>
<svg class="a" style="left:1878px;top:788.5px;" width="11" height="11" viewBox="0 0 11 11"><circle cx="5.5" cy="5.5" r="5.3" fill="#c4c4c4"/><path d="M3.8 4.2Q3.8 2.4 5.5 2.4Q7.2 2.4 7.2 3.9Q7.2 4.9 6 5.5Q5.5 5.8 5.5 6.6" stroke="#3b3b3b" stroke-width="1.4" fill="none"/><circle cx="5.5" cy="8.5" r="0.9" fill="#3b3b3b"/></svg>
<svg class="a" style="left:1897px;top:788px;" width="4" height="12" viewBox="0 0 4 12"><circle cx="2" cy="2" r="1.3" fill="#c4c4c4"/><circle cx="2" cy="6" r="1.3" fill="#c4c4c4"/><circle cx="2" cy="10" r="1.3" fill="#c4c4c4"/></svg>
<div class="t" style="left:1519.4px;top:813.00px;font-size:12.5px;line-height:12.5px;color:#858585;">Shader</div>
<div class="a" style="left:1571.5px;top:810px;width:236px;height:17px;background:#454545;border-radius:3px"></div>
<div class="t" style="left:1574px;top:813.00px;font-size:12.5px;line-height:12.5px;color:#6c6c6c;">UI/Default</div>
<svg class="a" style="left:1795px;top:816px;" width="8" height="5" viewBox="0 0 8 5"><path d="M0 0H8L4.0 5Z" fill="#7a7a7a"/></svg>
<div class="a" style="left:1813px;top:810px;width:42px;height:17px;background:#555555;border:1px solid #303030;border-radius:3px"></div>
<div class="t" style="left:1534px;width:600px;text-align:center;top:813.00px;font-size:12.5px;line-height:12.5px;color:#c4c4c4;">Edit...</div>
<div class="a" style="left:1860.5px;top:810px;width:41px;height:17px;background:#555555;border:1px solid #303030;border-radius:3px"></div>
<svg class="a" style="left:1869px;top:813px;" width="12" height="10" viewBox="0 0 12 10"><path d="M3.5 1H12M5 5H12M5 9H12" stroke="#c4c4c4" stroke-width="1.1"/><path d="M1 1V9M1 5H3M1 9H3" stroke="#c4c4c4" stroke-width="0.8"/></svg>
<svg class="a" style="left:1888px;top:816px;" width="8" height="5" viewBox="0 0 8 5"><path d="M0 0H8L4.0 5Z" fill="#c4c4c4"/></svg>
<svg class="a" style="left:1472px;top:819px;" width="8" height="8" viewBox="0 0 8 8"><path d="M0 0L8 4.0L0 8Z" fill="#606060"/></svg>
<div class="a" style="left:1466px;top:828px;width:453px;height:1px;background:#242424;"></div>
<div class="a" style="left:1466px;top:829px;width:453px;height:20px;background:#3c3c3c;"></div>
<div class="t" style="left:1474.5px;top:834.00px;font-size:12.5px;line-height:12.5px;color:#d2d2d2;font-weight:bold;">GameClearButton</div>
<svg class="a" style="left:1582px;top:836px;" width="8" height="5" viewBox="0 0 8 5"><path d="M0 0H8L4.0 5Z" fill="#c4c4c4"/></svg>
<div class="a" style="left:1594px;top:829px;width:1px;height:20px;background:#2a2a2a;"></div>
<div class="a" style="left:1598px;top:837.5px;width:304px;height:1px;background:#2a2a2a;"></div>
<div class="a" style="left:1598px;top:840px;width:304px;height:1px;background:#2a2a2a;"></div>
<div class="a" style="left:1598px;top:838.5px;width:304px;height:1px;background:#4a4a4a;"></div>
<div class="a" style="left:1598px;top:841px;width:304px;height:1px;background:#4a4a4a;"></div>
<svg class="a" style="left:1909px;top:833px;" width="4" height="12" viewBox="0 0 4 12"><circle cx="2" cy="2" r="1.3" fill="#c4c4c4"/><circle cx="2" cy="6" r="1.3" fill="#c4c4c4"/><circle cx="2" cy="10" r="1.3" fill="#c4c4c4"/></svg>
<div class="a" style="left:1466px;top:849px;width:453px;height:154px;background:#2e2e2e;"></div>
<div class="a" style="left:1466px;top:1003px;width:453px;height:7px;background:#3e3e3e;"></div>
<div class="a" style="left:1616px;top:850px;width:154px;height:153px;overflow:hidden;background:conic-gradient(#464646 0 25%,#5d5d5d 0 50%,#464646 0 75%,#5d5d5d 0);background-size:32px 32px;background-position:-19.5px -3px"></div>
<div class="a" style="left:1616px;top:850px;width:154px;height:153px;overflow:hidden"><div class="a" style="left:12px;top:11px;width:131px;height:129px;border-radius:30px;background:rgba(0,0,0,0.45);filter:blur(5px)"></div><div class="a" style="left:13px;top:12px;width:129px;height:128px;border-radius:30px;background:#f7f7f7;filter:blur(1.2px)"></div></div>
<div class="a" style="left:1663px;top:850px;width:1px;height:153px;background:repeating-linear-gradient(180deg,#707070 0 8px,transparent 8px 16px);background-position:0 5px"></div>
<div class="a" style="left:1721px;top:850px;width:1px;height:153px;background:repeating-linear-gradient(180deg,#707070 0 8px,transparent 8px 16px);background-position:0 5px"></div>
<div class="a" style="left:1616px;top:899px;width:154px;height:1px;background:repeating-linear-gradient(90deg,#707070 0 8px,transparent 8px 16px);background-position:7.5px 0"></div>
<div class="a" style="left:1616px;top:957px;width:154px;height:1px;background:repeating-linear-gradient(90deg,#707070 0 8px,transparent 8px 16px);background-position:7.5px 0"></div>
<div class="t" style="left:1392px;width:600px;text-align:center;top:972.00px;font-size:12px;line-height:12px;color:#e8e8e8;font-weight:bold;text-shadow:0 0 2px #000,0 0 2px #000,1px 1px 2px #000,-1px -1px 2px #000">GameClearButton</div>
<div class="t" style="left:1392px;width:600px;text-align:center;top:986.00px;font-size:12px;line-height:12px;color:#e8e8e8;font-weight:bold;text-shadow:0 0 2px #000,0 0 2px #000,1px 1px 2px #000,-1px -1px 2px #000">Image Size: 32x32</div>
<div class="a" style="left:0px;top:626px;width:1464px;height:2px;background:#1e1e1e;"></div>
<div class="a" style="left:0px;top:628px;width:1464px;height:20px;background:#282828;"></div>
<div class="a" style="left:0px;top:628px;width:78px;height:20px;background:#3c3c3c;border-radius:3px 3px 0 0"></div>
<svg class="a" style="left:6.5px;top:634px;" width="12" height="10" viewBox="0 0 12 10"><path d="M0 1Q0 0 1 0H4.5600000000000005L6.0 1.7999999999999998H11Q12 1.7999999999999998 12 2.8000000000000003V9Q12 10 11 10H1Q0 10 0 9Z" fill="#c4c4c4"/></svg>
<div class="t" style="left:23px;top:634.00px;font-size:12.5px;line-height:12.5px;color:#c4c4c4;">Project</div>
<svg class="a" style="left:90px;top:633px;" width="10" height="11" viewBox="0 0 10 11"><rect x="0" y="0" width="10" height="11" rx="1" fill="#c4c4c4"/><path d="M1.8 3H8.2M1.8 5.5H6.5M1.8 8H8.2" stroke="#2a2a2a" stroke-width="1.1"/></svg>
<div class="t" style="left:105px;top:634.00px;font-size:12.5px;line-height:12.5px;color:#c4c4c4;">Console</div>
<svg class="a" style="left:1430px;top:633px;" width="10" height="11" viewBox="0 0 10 11"><path d="M2.2 5.4V3.2Q2.2 0.7 4.6 0.7Q7 0.7 7.2 3.2" stroke="#c4c4c4" stroke-width="1.2" fill="none"/><rect x="0.8" y="5.6" width="8" height="4.4" rx="0.6" stroke="#c4c4c4" stroke-width="1.2" fill="none"/></svg>
<svg class="a" style="left:1449px;top:632px;" width="4" height="12" viewBox="0 0 4 12"><circle cx="2" cy="2" r="1.3" fill="#c4c4c4"/><circle cx="2" cy="6" r="1.3" fill="#c4c4c4"/><circle cx="2" cy="10" r="1.3" fill="#c4c4c4"/></svg>
<div class="a" style="left:0px;top:648px;width:1464px;height:21px;background:#3c3c3c;"></div>
<div class="a" style="left:0px;top:668px;width:1464px;height:1px;background:#2a2a2a;"></div>
<svg class="a" style="left:7px;top:652px;" width="12" height="12" viewBox="0 0 12 12"><path d="M6 0V12M0 6H12" stroke="#c4c4c4" stroke-width="1.8"/></svg>
<svg class="a" style="left:23px;top:656px;" width="8" height="4.5" viewBox="0 0 8 4.5"><path d="M0 0H8L4.0 4.5Z" fill="#c4c4c4"/></svg>
<div class="a" style="left:1000px;top:650px;width:316px;height:16px;background:#2a2a2a;border:1px solid #212121;border-radius:3px"></div>
<svg class="a" style="left:1004px;top:654px;" width="9" height="9" viewBox="0 0 9 9"><circle cx="3.3" cy="3.3" r="2.4" stroke="#c4c4c4" stroke-width="1.3" fill="none"/><path d="M5 5L8 8" stroke="#c4c4c4" stroke-width="1.8"/></svg>
<div class="a" style="left:1300px;top:651px;width:15px;height:14px;background:#333333;"></div>
<svg class="a" style="left:1302px;top:652px;" width="13" height="13" viewBox="0 0 13 13"><rect x="4" y="0.5" width="8.5" height="8.5" stroke="#c4c4c4" fill="none" stroke-width="1.1"/><rect x="0.5" y="8" width="4.5" height="4.5" stroke="#c4c4c4" fill="#333" stroke-width="1.1"/><path d="M5 8L10 3M7 3H10V6" stroke="#c4c4c4" stroke-width="1.1" fill="none"/></svg>
<div class="a" style="left:1322px;top:649px;width:1px;height:19px;background:#2a2a2a;"></div>
<svg class="a" style="left:1327px;top:651px;" width="13" height="13" viewBox="0 0 13 13"><circle cx="4" cy="9" r="3.5" fill="#c4c4c4"/><rect x="1" y="0.5" width="5.5" height="5" fill="#c4c4c4"/><path d="M8.5 4L12.5 11H5Z" fill="#c4c4c4"/></svg>
<div class="a" style="left:1347px;top:649px;width:1px;height:19px;background:#2a2a2a;"></div>
<svg class="a" style="left:1352px;top:652px;" width="12" height="12" viewBox="0 0 12 12"><path d="M6 0.5H11.5V6L5.5 12L0 6.5Z" fill="#c4c4c4"/><circle cx="9" cy="3" r="1" fill="#3c3c3c"/></svg>
<div class="a" style="left:1373px;top:649px;width:1px;height:19px;background:#2a2a2a;"></div>
<svg class="a" style="left:1378px;top:651px;" width="14" height="14" viewBox="0 0 14 14"><circle cx="7" cy="7" r="6.5" fill="#d2d2d2"/><rect x="6" y="2.8" width="2" height="5.6" fill="#3c3c3c"/><circle cx="7" cy="10.5" r="1.1" fill="#3c3c3c"/></svg>
<div class="a" style="left:1399px;top:649px;width:1px;height:19px;background:#2a2a2a;"></div>
<svg class="a" style="left:1405px;top:652px;" width="13" height="12" viewBox="0 0 13 12"><path d="M6.5 0.5L8.3 4.4L12.5 4.8L9.4 7.6L10.3 11.8L6.5 9.7L2.7 11.8L3.6 7.6L0.5 4.8L4.7 4.4Z" fill="#8a8a8a"/></svg>
<div class="a" style="left:1425px;top:649px;width:1px;height:19px;background:#2a2a2a;"></div>
<svg class="a" style="left:1429px;top:654px;" width="15" height="9" viewBox="0 0 15 9"><path d="M0.5 4.5Q7.5 -3 14.5 4.5Q7.5 12 0.5 4.5Z" fill="#6a6a6a"/><circle cx="7.5" cy="4.5" r="2.2" fill="#3c3c3c"/></svg>
<div class="t" style="left:1445px;top:653.00px;font-size:12.5px;line-height:12.5px;color:#c4c4c4;">17</div>
<div class="a" style="left:0px;top:669px;width:207px;height:341px;background:#383838;"></div>
<div class="a" style="left:207px;top:669px;width:1px;height:341px;background:#232323;"></div>
<svg class="a" style="left:4.7px;top:676px;" width="8" height="7" viewBox="0 0 8 7"><path d="M0 0H8L4.0 7Z" fill="#6c6c6c"/></svg>
<svg class="a" style="left:18px;top:671px;" width="12" height="12" viewBox="0 0 12 12"><path d="M6 0.5L7.6 4.2L11.5 4.5L8.5 7.1L9.4 11L6 9L2.6 11L3.5 7.1L0.5 4.5L4.4 4.2Z" fill="#c4c4c4"/></svg>
<div class="t" style="left:35.2px;top:672.00px;font-size:12.5px;line-height:12.5px;color:#d2d2d2;font-weight:bold;">Favorites</div>
<svg class="a" style="left:31.3px;top:686.2px;" width="12" height="12" viewBox="0 0 12 12"><circle cx="4.8" cy="4.8" r="3.9" stroke="#c4c4c4" stroke-width="1.1" fill="none"/><path d="M7.6 7.6L11.5 11.5" stroke="#c4c4c4" stroke-width="1.3"/></svg>
<div class="t" style="left:48.2px;top:687.00px;font-size:12.5px;line-height:12.5px;color:#c4c4c4;">All Materials</div>
<svg class="a" style="left:31.3px;top:702.2px;" width="12" height="12" viewBox="0 0 12 12"><circle cx="4.8" cy="4.8" r="3.9" stroke="#c4c4c4" stroke-width="1.1" fill="none"/><path d="M7.6 7.6L11.5 11.5" stroke="#c4c4c4" stroke-width="1.3"/></svg>
<div class="t" style="left:48.2px;top:703.00px;font-size:12.5px;line-height:12.5px;color:#c4c4c4;">All Models</div>
<svg class="a" style="left:31.3px;top:718.2px;" width="12" height="12" viewBox="0 0 12 12"><circle cx="4.8" cy="4.8" r="3.9" stroke="#c4c4c4" stroke-width="1.1" fill="none"/><path d="M7.6 7.6L11.5 11.5" stroke="#c4c4c4" stroke-width="1.3"/></svg>
<div class="t" style="left:48.2px;top:719.00px;font-size:12.5px;line-height:12.5px;color:#c4c4c4;">All Prefabs</div>
<div class="a" style="left:0px;top:748px;width:207px;height:16px;background:#4d4d4d;"></div>
<svg class="a" style="left:4.7px;top:752.5px;" width="8" height="7" viewBox="0 0 8 7"><path d="M0 0H8L4.0 7Z" fill="#6c6c6c"/></svg>
<svg class="a" style="left:17.7px;top:750px;" width="14" height="11" viewBox="0 0 14 11"><path d="M0.5 1Q0.5 0.5 1 0.5H5L6.2 2H11Q11.5 2 11.5 2.5V4H3.5L0.5 10.5Z" fill="#c4c4c4"/><path d="M3.5 4.5H13.5L10.5 10.5H0.8Z" fill="#c4c4c4"/></svg>
<div class="t" style="left:35.2px;top:750.00px;font-size:12.5px;line-height:12.5px;color:#d2d2d2;font-weight:bold;">Assets</div>
<svg class="a" style="left:31.8px;top:766.5px;" width="12" height="10" viewBox="0 0 12 10"><path d="M0 1Q0 0 1 0H4.5600000000000005L6.0 1.7999999999999998H11Q12 1.7999999999999998 12 2.8000000000000003V9Q12 10 11 10H1Q0 10 0 9Z" fill="#c4c4c4"/></svg>
<div class="t" style="left:48.2px;top:766.00px;font-size:12.5px;line-height:12.5px;color:#c4c4c4;">Scenes</div>
<svg class="a" style="left:31.8px;top:782.5px;" width="12" height="10" viewBox="0 0 12 10"><path d="M0 1Q0 0 1 0H4.5600000000000005L6.0 1.7999999999999998H11Q12 1.7999999999999998 12 2.8000000000000003V9Q12 10 11 10H1Q0 10 0 9Z" fill="#c4c4c4"/></svg>
<div class="t" style="left:48.2px;top:782.00px;font-size:12.5px;line-height:12.5px;color:#c4c4c4;">Settings</div>
<svg class="a" style="left:5.2px;top:798.5px;" width="7" height="8" viewBox="0 0 7 8"><path d="M0 0L7 4.0L0 8Z" fill="#6c6c6c"/></svg>
<svg class="a" style="left:18px;top:798.5px;" width="12" height="10" viewBox="0 0 12 10"><path d="M0 1Q0 0 1 0H4.5600000000000005L6.0 1.7999999999999998H11Q12 1.7999999999999998 12 2.8000000000000003V9Q12 10 11 10H1Q0 10 0 9Z" fill="#c4c4c4"/></svg>
<div class="t" style="left:35.2px;top:798.00px;font-size:12.5px;line-height:12.5px;color:#d2d2d2;font-weight:bold;">Packages</div>
<div class="a" style="left:208px;top:669px;width:1256px;height:21px;background:#3e3e3e;"></div>
<div class="t" style="left:212.4px;top:673.00px;font-size:12.5px;line-height:12.5px;color:#d2d2d2;font-weight:bold;">Assets</div>
<div class="a" style="left:208px;top:690px;width:1256px;height:299px;background:#333333;"></div>
<div class="a" style="left:208px;top:989px;width:1256px;height:1px;background:#474747;"></div>
<div class="a" style="left:208px;top:990px;width:1256px;height:20px;background:#414141;"></div>
<div class="a" style="left:1393px;top:999px;width:55px;height:2px;background:#5e5e5e;"></div>
<svg class="a" style="left:1420px;top:995px;" width="10" height="10" viewBox="0 0 10 10"><circle cx="5" cy="5" r="5" fill="#a0a0a0"/></svg>
<svg class="a" style="left:230.6px;top:711.5px;" width="49" height="41" viewBox="0 0 49 41"><path d="M3 0H16Q18 0 19 2L22 7H46Q49 7 49 10V38Q49 41 46 41H3Q0 41 0 38V3Q0 0 3 0Z" fill="#c2c2c2"/></svg>
<div class="t" style="left:-46px;width:600px;text-align:center;top:767.00px;font-size:10.5px;line-height:10.5px;color:#c4c4c4;">Scenes</div>
<svg class="a" style="left:307px;top:711.5px;" width="49" height="41" viewBox="0 0 49 41"><path d="M3 0H16Q18 0 19 2L22 7H46Q49 7 49 10V38Q49 41 46 41H3Q0 41 0 38V3Q0 0 3 0Z" fill="#c2c2c2"/></svg>
<div class="t" style="left:30px;width:600px;text-align:center;top:767.00px;font-size:10.5px;line-height:10.5px;color:#c4c4c4;">Settings</div>
<svg class="a" style="left:383px;top:703.5px;" width="49" height="57" viewBox="0 0 49 57"><path d="M3 0.2H36L48.2 12.2V53.5Q48.2 56.5 45.2 56.5H3Q0 56.5 0 53.5V3.2Q0 0.2 3 0.2Z" fill="#efefef"/><g stroke="#1f6e26" stroke-width="4.6" fill="none"><path d="M21.3 12.5L16.5 47M30.3 12.5L25.9 47M10.8 22.6H37M9 34.6H35"/></g></svg>
<div class="t" style="left:107px;width:600px;text-align:center;top:767.00px;font-size:10.5px;line-height:10.5px;color:#c4c4c4;">BallControl...</div>
<svg class="a" style="left:459.4px;top:703.5px;" width="49" height="57" viewBox="0 0 49 57"><path d="M3 0.2H36L48.2 12.2V53.5Q48.2 56.5 45.2 56.5H3Q0 56.5 0 53.5V3.2Q0 0.2 3 0.2Z" fill="#efefef"/><g stroke="#1f6e26" stroke-width="4.6" fill="none"><path d="M21.3 12.5L16.5 47M30.3 12.5L25.9 47M10.8 22.6H37M9 34.6H35"/></g></svg>
<div class="t" style="left:183.39999999999998px;width:600px;text-align:center;top:767.00px;font-size:10.5px;line-height:10.5px;color:#c4c4c4;">CameraCo...</div>
<svg class="a" style="left:535.4px;top:703.5px;" width="49" height="57" viewBox="0 0 49 57"><path d="M3 0.2H36L48.2 12.2V53.5Q48.2 56.5 45.2 56.5H3Q0 56.5 0 53.5V3.2Q0 0.2 3 0.2Z" fill="#efefef"/><g stroke="#1f6e26" stroke-width="4.6" fill="none"><path d="M21.3 12.5L16.5 47M30.3 12.5L25.9 47M10.8 22.6H37M9 34.6H35"/></g></svg>
<div class="t" style="left:259.4px;width:600px;text-align:center;top:767.00px;font-size:10.5px;line-height:10.5px;color:#c4c4c4;">GameClea...</div>
<svg class="a" style="left:610.5px;top:704.5px;" width="58" height="57" viewBox="0 0 58 57"><path d="M42.5 24.1V13.9L22.4 2.3L2.7 13.9V37L22.4 47.9 M2.7 13.9L22.4 25.5L42.5 13.9 M22.4 25.5V47.9" stroke="#78cff5" stroke-width="3.7" fill="none" stroke-linejoin="round" stroke-linecap="round"/><path d="M41 29.3H38.5Q36.6 29.3 36.6 31.2V39.6L33 41.6L36.6 43.6V51.7Q36.6 53.6 38.5 53.6H41 M44.3 29.3H46.4Q48.3 29.3 48.3 31.2V39.6L52 41.6L48.3 43.6V51.7Q48.3 53.6 46.4 53.6H44.3" stroke="#f86a3c" stroke-width="3.6" fill="none" stroke-linejoin="bevel"/></svg>
<div class="t" style="left:333px;width:600px;text-align:center;top:767.00px;font-size:10.5px;line-height:10.5px;color:#c4c4c4;">Readme</div>
<div class="a" style="left:681px;top:702px;width:60px;height:60px;background:radial-gradient(ellipse at 60% 40%,#5c5c5c,#535353);box-shadow:0 0 1px #222"></div>
<svg class="a" style="left:681px;top:702px;" width="60" height="60" viewBox="0 0 60 60"><path d="M4.5 14.5L29 9L52 12L39 19Z" fill="#7a7e7f"/><path d="M4.5 14.5L39 19L38 57L6 50Z" fill="#464747"/><path d="M39 19L52 12L51 46L38 57Z" fill="#4d4e4f"/></svg>
<svg class="a" style="left:690px;top:765px;" width="12" height="12" viewBox="0 0 12 12"><path d="M6 0.5L11.5 3.2V8.8L6 11.5L0.5 8.8V3.2Z" fill="#8ad6f5" stroke="#1e5a78" stroke-width="0.8"/><path d="M0.5 3.2L6 6L11.5 3.2M6 6V11.5" stroke="#1e5a78" stroke-width="0.9" fill="none"/></svg>
<div class="t" style="left:705px;top:767.00px;font-size:10.5px;line-height:10.5px;color:#c4c4c4;">Score</div>
<svg class="a" style="left:763px;top:703.5px;" width="49" height="57" viewBox="0 0 49 57"><path d="M3 0.2H36L48.2 12.2V53.5Q48.2 56.5 45.2 56.5H3Q0 56.5 0 53.5V3.2Q0 0.2 3 0.2Z" fill="#efefef"/><g stroke="#1f6e26" stroke-width="4.6" fill="none"><path d="M21.3 12.5L16.5 47M30.3 12.5L25.9 47M10.8 22.6H37M9 34.6H35"/></g></svg>
<div class="t" style="left:487px;width:600px;text-align:center;top:767.00px;font-size:10.5px;line-height:10.5px;color:#c4c4c4;">ScoreMan...</div>
<svg class="a" style="left:839px;top:703.5px;" width="49" height="57" viewBox="0 0 49 57"><path d="M3 0.2H36L48.2 12.2V53.5Q48.2 56.5 45.2 56.5H3Q0 56.5 0 53.5V3.2Q0 0.2 3 0.2Z" fill="#efefef"/><g stroke="#1f6e26" stroke-width="4.6" fill="none"><path d="M21.3 12.5L16.5 47M30.3 12.5L25.9 47M10.8 22.6H37M9 34.6H35"/></g></svg>
<div class="t" style="left:563px;width:600px;text-align:center;top:767.00px;font-size:10.5px;line-height:10.5px;color:#c4c4c4;">TitleMana...</div>
<svg class="a" style="left:913.5px;top:704.5px;" width="58" height="57" viewBox="0 0 58 57"><path d="M42.5 24.1V13.9L22.4 2.3L2.7 13.9V37L22.4 47.9 M2.7 13.9L22.4 25.5L42.5 13.9 M22.4 25.5V47.9" stroke="#78cff5" stroke-width="3.7" fill="none" stroke-linejoin="round" stroke-linecap="round"/><path d="M41 29.3H38.5Q36.6 29.3 36.6 31.2V39.6L33 41.6L36.6 43.6V51.7Q36.6 53.6 38.5 53.6H41 M44.3 29.3H46.4Q48.3 29.3 48.3 31.2V39.6L52 41.6L48.3 43.6V51.7Q48.3 53.6 46.4 53.6H44.3" stroke="#f86a3c" stroke-width="3.6" fill="none" stroke-linejoin="bevel"/></svg>
<div class="t" style="left:639px;width:600px;text-align:center;top:767.00px;font-size:10.5px;line-height:10.5px;color:#c4c4c4;">UniversalR...</div>
<div class="a" style="left:0px;top:1010px;width:1919px;height:19px;background:#191919;"></div>
<svg class="a" style="left:1820px;top:1013px;" width="14" height="14" viewBox="0 0 14 14"><ellipse cx="7" cy="8" rx="4" ry="5" fill="#f2c12e"/><circle cx="7" cy="3" r="2" fill="#f2c12e"/><path d="M1 4L3.5 6M13 4L10.5 6M0.5 8.5H3M13.5 8.5H11M1.2 13L3.5 11M12.8 13L10.5 11" stroke="#f2c12e" stroke-width="1.2"/></svg>
<svg class="a" style="left:1846px;top:1013px;" width="14" height="14" viewBox="0 0 14 14"><ellipse cx="7" cy="2.8" rx="5.5" ry="2.3" fill="#c4c4c4"/><path d="M1.5 4V6.8Q7 10 12.5 6.8V4Q7 7 1.5 4ZM1.5 8V11Q7 14.2 12.5 11V8Q7 11 1.5 8Z" fill="#c4c4c4"/><path d="M1 1L13 13" stroke="#191919" stroke-width="1.5"/></svg>
<svg class="a" style="left:1873px;top:1013px;" width="14" height="14" viewBox="0 0 14 14"><circle cx="7" cy="7" r="5.5" stroke="#c4c4c4" stroke-width="1.3" fill="none"/><path d="M3 7L7 3L11 7L7 11Z" stroke="#c4c4c4" stroke-width="1" fill="none"/><path d="M1 1L13 13" stroke="#c4c4c4" stroke-width="1.3"/></svg>
<svg class="a" style="left:1899px;top:1014px;" width="13" height="13" viewBox="0 0 13 13"><circle cx="6.5" cy="6.5" r="5.8" stroke="#c4c4c4" stroke-width="1.2" fill="none"/><path d="M3.5 6.5L5.7 8.7L9.5 4.5" stroke="#c4c4c4" stroke-width="1.3" fill="none"/></svg></body></html>
